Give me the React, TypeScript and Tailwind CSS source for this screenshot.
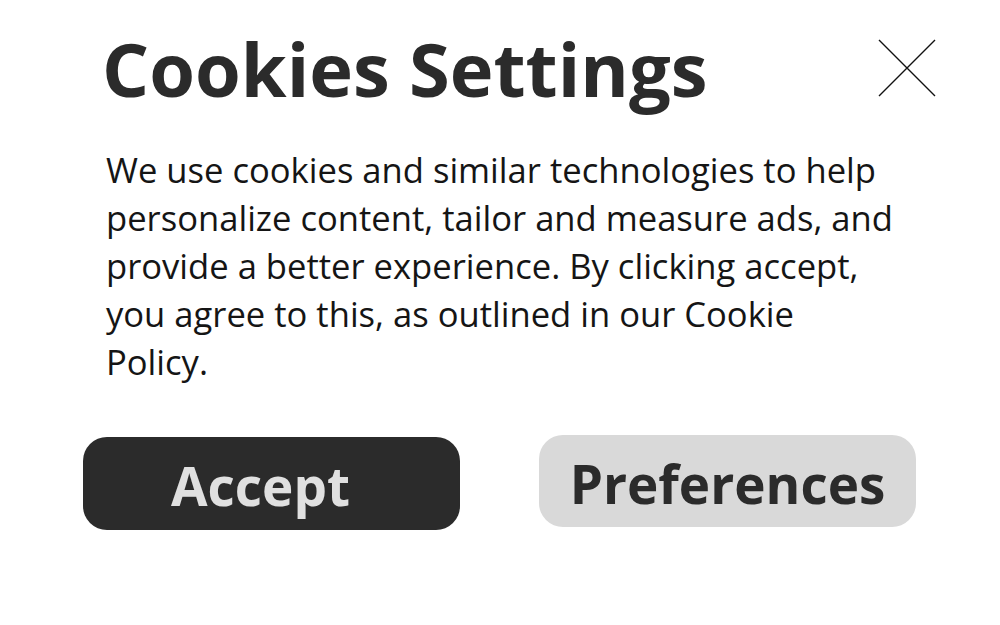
import React from 'react'

const CloseIcon: React.FC = () => (
  <svg width="58" height="58" viewBox="0 0 58 58" fill="none" stroke="#111" strokeWidth="1.4">
    <path d="M1 1L57 57M57 1L1 57" />
  </svg>
)

const App: React.FC = () => {
  return (
    <div className="w-[1000px] h-[625px] bg-white overflow-hidden" style={{ fontFamily: '"Open Sans", sans-serif' }}>
      <div className="flex items-start justify-between pl-[102px] pr-[64px] pt-[25px]">
        <h1 className="text-[74px] leading-[88px] font-bold text-[#2b2b2b]">
          Cookies Settings
        </h1>
        <div className="mt-[14px]">
          <CloseIcon />
        </div>
      </div>

      <p className="ml-[106px] w-[796px] mt-[33px] text-[34.6px] leading-[48px] text-[#151515]">
        We use cookies and similar technologies to help personalize content, tailor and measure ads, and provide a better experience. By clicking accept, you agree to this, as outlined in our Cookie Policy.
      </p>

      <div className="flex items-start justify-between pl-[83px] pr-[84px] mt-[49px]">
        <button className="w-[377px] h-[93px] mt-[2px] rounded-[24px] bg-[#2b2b2b] text-[#e0e0e0] text-[53px] font-bold flex items-center justify-center pt-[5px] pr-[22px]">
          Accept
        </button>
        <button className="w-[377px] h-[92px] rounded-[24px] bg-[#d9d9d9] text-[#2b2b2b] text-[53px] font-bold flex items-center justify-center pt-[5px]">
          Preferences
        </button>
      </div>
    </div>
  )
}

export default App
